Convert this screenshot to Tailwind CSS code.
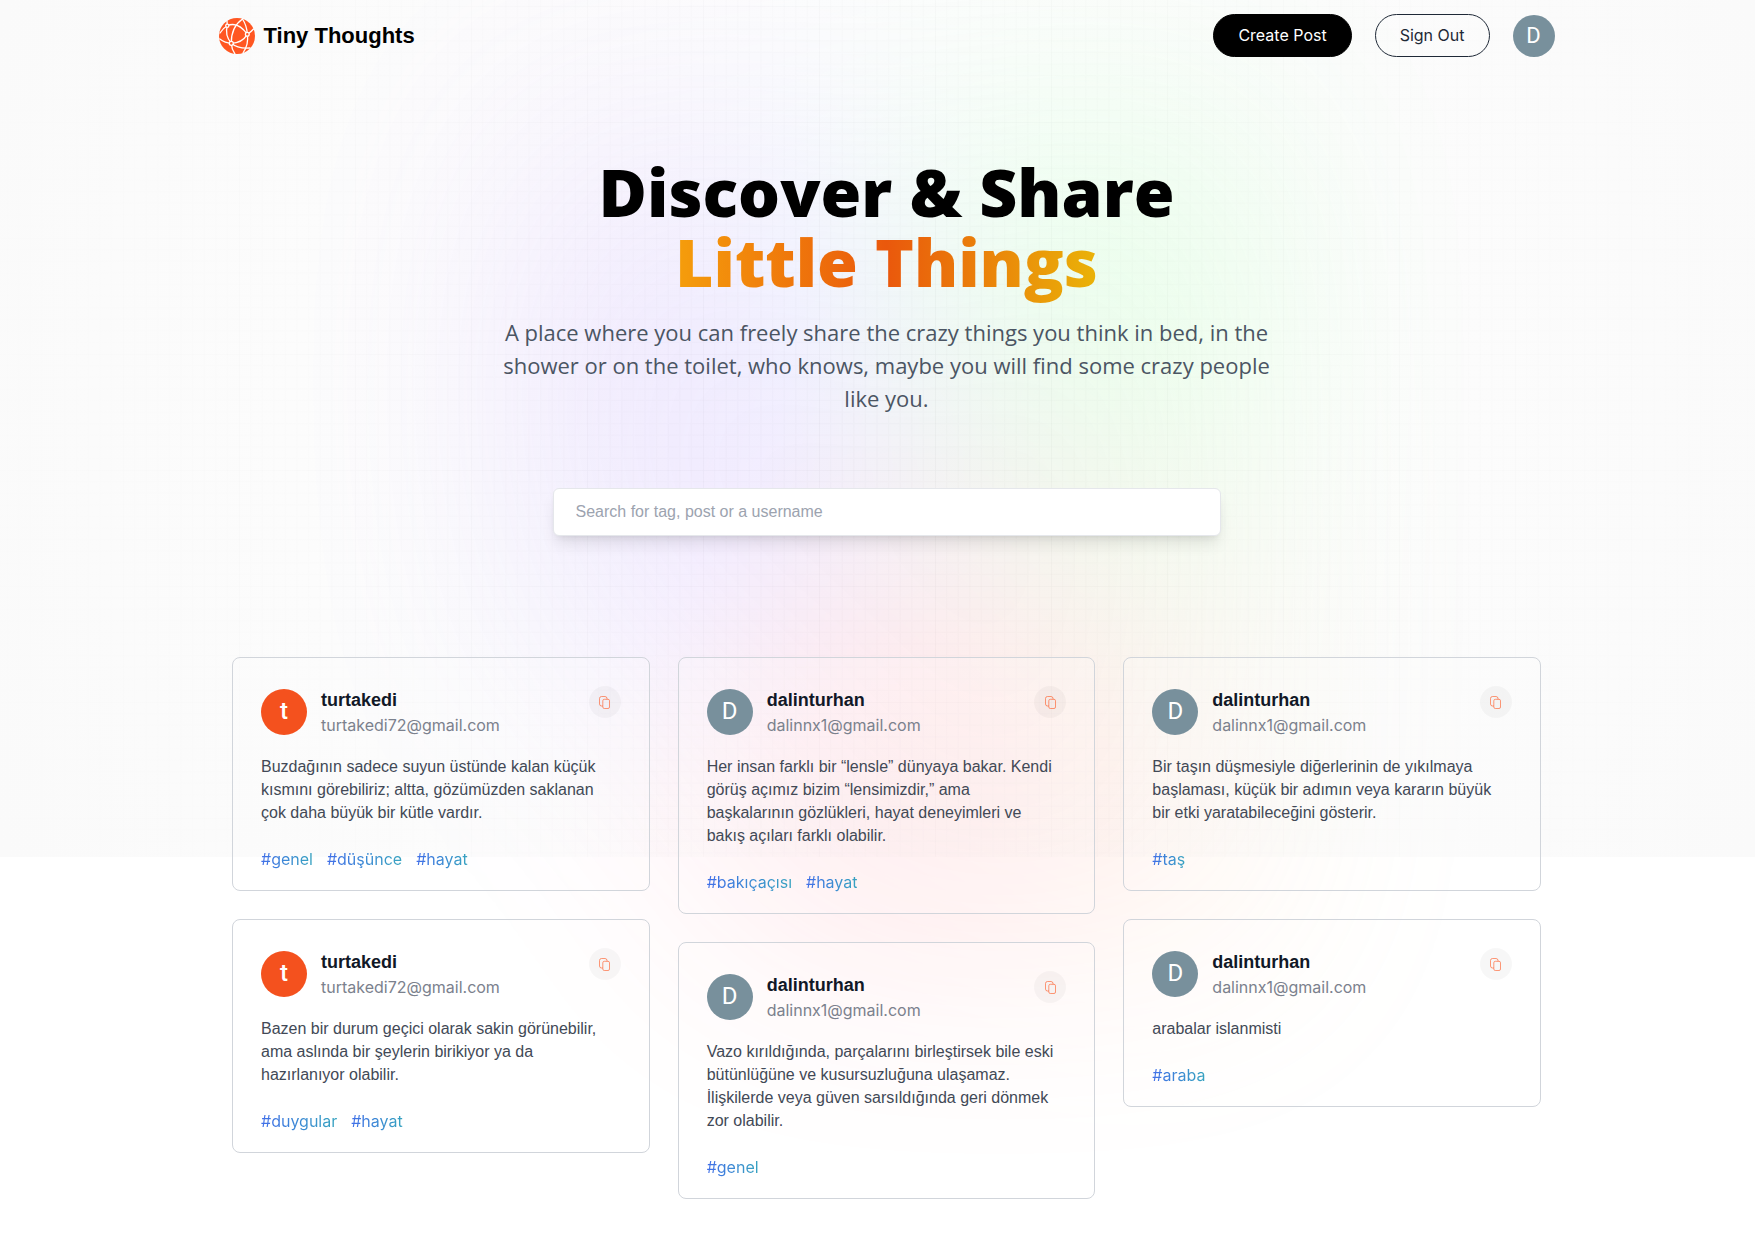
<!DOCTYPE html>
<html lang="tr">
<head>
<meta charset="utf-8">
<meta name="viewport" content="width=device-width, initial-scale=1">
<title>Tiny Thoughts</title>
<script src="https://cdn.jsdelivr.net/npm/@tailwindcss/browser@4"></script>
</head>
<body class="relative isolate min-h-screen overflow-x-hidden bg-white font-['Liberation_Sans',Arial,sans-serif] text-[16px] leading-[23px]">

<!-- shared icons -->
<svg class="hidden" aria-hidden="true">
  <symbol id="copy" viewBox="0 0 11 13" fill="none" stroke="currentColor" stroke-width="1" stroke-linejoin="round">
    <path d="M3.800 10H2.500a2 2 0 0 1-2-2V2.500a2 2 0 0 1 2-2H6a2 2 0 0 1 2 2v.800"/>
    <rect x="3.800" y="3.300" width="6.700" height="9.200" rx="1.500"/>
  </symbol>
</svg>

<!-- backdrop: grid, vignette and colour glow -->
<div class="pointer-events-none absolute inset-x-0 top-0 -z-10 h-[857px]" aria-hidden="true">
  <svg class="absolute inset-0 h-full w-full">
    <defs>
      <pattern id="grid" width="100" height="100" patternUnits="userSpaceOnUse" patternTransform="translate(7 6) scale(1.16)">
        <path d="M10 0V100M20 0V100M30 0V100M40 0V100M50 0V100M60 0V100M70 0V100M80 0V100M90 0V100M0 10H100M0 20H100M0 30H100M0 40H100M0 50H100M0 60H100M0 70H100M0 80H100M0 90H100" stroke="#000" stroke-opacity=".016"/>
        <path d="M0 0V100M0 0H100" stroke="#000" stroke-opacity=".05"/>
      </pattern>
    </defs>
    <rect width="100%" height="100%" fill="url(#grid)"/>
  </svg>
  <div class="absolute inset-0 bg-[radial-gradient(circle,rgba(250,250,250,0)_0,#fafafa_100%)]"></div>
  <div class="absolute inset-0 flex justify-center pl-[18px]">
    <div class="relative top-[93px] h-full w-full max-w-[743px] opacity-15 [filter:blur(116px)_saturate(150%)] bg-[radial-gradient(at_97%_21%,hsla(125,98%,72%,1)_0px,transparent_50%),radial-gradient(at_52%_99%,hsla(354,98%,61%,1)_0px,transparent_50%),radial-gradient(at_10%_29%,hsla(256,96%,67%,1)_0px,transparent_50%),radial-gradient(at_97%_96%,hsla(38,60%,74%,1)_0px,transparent_50%),radial-gradient(at_33%_50%,hsla(222,67%,73%,1)_0px,transparent_50%),radial-gradient(at_79%_53%,hsla(343,68%,79%,1)_0px,transparent_50%)]"></div>
  </div>
</div>

<div class="flex flex-col items-center pb-9 pl-[18px]">

  <nav class="flex w-full max-w-[1336px] items-center justify-between py-[14px]">
    <a href="#" class="flex items-center gap-[9px]">
      <svg class="h-9 w-9" viewBox="0 0 36 36" aria-hidden="true">
        <circle cx="18" cy="18" r="18" fill="#ff5722"/>
        <g fill="none" stroke="#fff" stroke-width="1.300" stroke-linecap="round">
          <path d="M8.300 7.700Q19 3 28.300 16.300"/>
          <path d="M8.300 7.700Q5.500 17 12.300 25.300"/>
          <path d="M12.300 25.300Q12 9 23.500 1"/>
          <path d="M12.300 25.300Q23 25 28.300 16.300"/>
          <path d="M28.300 16.300Q28 8 23.500 1"/>
          <path d="M28.300 16.300Q30 26 24 35"/>
          <path d="M28.300 16.300Q32 14 34.500 11"/>
          <path d="M12.300 25.300Q19 31 31 30"/>
          <path d="M12.300 25.300Q12.500 31 16 36"/>
          <path d="M12.300 25.300Q6 25 .800 21"/>
          <path d="M8.300 7.700Q4 10 1 15"/>
          <path d="M8.300 7.700L8 3"/>
        </g>
        <g fill="#ff5722" stroke="#fff" stroke-width="1.300">
          <circle cx="8.300" cy="7.700" r="1.600"/>
          <circle cx="28.300" cy="16.300" r="1.900"/>
          <circle cx="12.300" cy="25.300" r="2"/>
        </g>
      </svg>
      <span class="text-[22px] leading-[28px] font-bold text-black">Tiny Thoughts</span>
    </a>
    <div class="flex items-center gap-[23px] font-['Inter',sans-serif]">
      <button type="button" class="h-[43px] rounded-full border border-black bg-black px-[24px] text-white">Create Post</button>
      <button type="button" class="h-[43px] rounded-full border border-[#1f2937] px-[24px] text-[#1f2937]">Sign Out</button>
      <a href="#" aria-label="Profile" class="flex size-[42px] items-center justify-center rounded-full bg-[#78909c] font-['Roboto',sans-serif] text-[22px] text-white">D</a>
    </div>
  </nav>

  <header class="mt-[85px] flex flex-col items-center text-center font-['Open_Sans',sans-serif]">
    <h1 class="text-[66px] leading-[70px] font-extrabold text-black">Discover &amp; Share<br>
      <span class="bg-linear-to-r/srgb from-[#f59e0b] via-[#ea580c] to-[#eab308] bg-clip-text text-transparent">Little Things</span></h1>
    <p class="mt-[20px] max-w-[780px] text-[22px] leading-[33px] text-[#4b5563]">A place where you can freely share the crazy things you think in bed, in the shower or on the toilet, who knows, maybe you will find some crazy people like you.</p>
  </header>

  <form class="mt-[73px] w-full max-w-[668px]">
    <input type="text" aria-label="Search" placeholder="Search for tag, post or a username" class="block h-[48px] w-full rounded-md border border-[#e5e7eb] bg-white px-[22px] shadow-lg outline-none placeholder:text-[#9ca3af]">
  </form>

  <main class="mt-[121px] grid w-full max-w-[1309px] grid-cols-3 items-start gap-7 text-[#424956]">
    <div class="flex flex-col gap-7">
      <article class="flex flex-col rounded-lg border border-[#d1d5db] bg-white/20 px-7 pt-7 pb-[19px]">
        <div class="flex items-start justify-between">
          <div class="flex items-center gap-[14px]">
            <span class="flex size-[46px] items-center justify-center rounded-full bg-[#f4511e] font-['Roboto',sans-serif] text-[24px] font-medium text-white">t</span>
            <div>
              <h3 class="text-[18px] leading-7 font-bold text-[#111827]">turtakedi</h3>
              <p class="font-['Inter',sans-serif] text-[#7b818d]">turtakedi72@gmail.com</p>
            </div>
          </div>
          <button type="button" aria-label="Copy" class="flex size-8 items-center justify-center rounded-full bg-black/3 text-[#ff5722]/60"><svg class="h-[13px] w-[11px]"><use href="#copy"/></svg></button>
        </div>
        <p class="mt-[18px] pr-[7px]">Buzdağının sadece suyun üstünde kalan küçük kısmını görebiliriz; altta, gözümüzden saklanan çok daha büyük bir kütle vardır.</p>
        <div class="mt-6 flex gap-[14px] font-['Inter',sans-serif]">
          <a href="#" class="bg-linear-to-r/srgb from-[#416fe8] to-[#37a3c0] bg-clip-text text-transparent">#genel</a>
          <a href="#" class="bg-linear-to-r/srgb from-[#416fe8] to-[#37a3c0] bg-clip-text text-transparent">#düşünce</a>
          <a href="#" class="bg-linear-to-r/srgb from-[#416fe8] to-[#37a3c0] bg-clip-text text-transparent">#hayat</a>
        </div>
      </article>
      <article class="flex flex-col rounded-lg border border-[#d1d5db] bg-white/20 px-7 pt-7 pb-[19px]">
        <div class="flex items-start justify-between">
          <div class="flex items-center gap-[14px]">
            <span class="flex size-[46px] items-center justify-center rounded-full bg-[#f4511e] font-['Roboto',sans-serif] text-[24px] font-medium text-white">t</span>
            <div>
              <h3 class="text-[18px] leading-7 font-bold text-[#111827]">turtakedi</h3>
              <p class="font-['Inter',sans-serif] text-[#7b818d]">turtakedi72@gmail.com</p>
            </div>
          </div>
          <button type="button" aria-label="Copy" class="flex size-8 items-center justify-center rounded-full bg-black/3 text-[#ff5722]/60"><svg class="h-[13px] w-[11px]"><use href="#copy"/></svg></button>
        </div>
        <p class="mt-[18px] pr-[7px]">Bazen bir durum geçici olarak sakin görünebilir, ama aslında bir şeylerin birikiyor ya da hazırlanıyor olabilir.</p>
        <div class="mt-6 flex gap-[14px] font-['Inter',sans-serif]">
          <a href="#" class="bg-linear-to-r/srgb from-[#416fe8] to-[#37a3c0] bg-clip-text text-transparent">#duygular</a>
          <a href="#" class="bg-linear-to-r/srgb from-[#416fe8] to-[#37a3c0] bg-clip-text text-transparent">#hayat</a>
        </div>
      </article>
    </div>

    <div class="flex flex-col gap-7">
      <article class="flex flex-col rounded-lg border border-[#d1d5db] bg-white/20 px-7 pt-7 pb-[19px]">
        <div class="flex items-start justify-between">
          <div class="flex items-center gap-[14px]">
            <span class="flex size-[46px] items-center justify-center rounded-full bg-[#78909c] font-['Roboto',sans-serif] text-[24px] text-white">D</span>
            <div>
              <h3 class="text-[18px] leading-7 font-bold text-[#111827]">dalinturhan</h3>
              <p class="font-['Inter',sans-serif] text-[#7b818d]">dalinnx1@gmail.com</p>
            </div>
          </div>
          <button type="button" aria-label="Copy" class="flex size-8 items-center justify-center rounded-full bg-black/3 text-[#ff5722]/60"><svg class="h-[13px] w-[11px]"><use href="#copy"/></svg></button>
        </div>
        <p class="mt-[18px] pr-[7px]">Her insan farklı bir “lensle” dünyaya bakar. Kendi görüş açımız bizim “lensimizdir,” ama başkalarının gözlükleri, hayat deneyimleri ve bakış açıları farklı olabilir.</p>
        <div class="mt-6 flex gap-[14px] font-['Inter',sans-serif]">
          <a href="#" class="bg-linear-to-r/srgb from-[#416fe8] to-[#37a3c0] bg-clip-text text-transparent">#bakıçaçısı</a>
          <a href="#" class="bg-linear-to-r/srgb from-[#416fe8] to-[#37a3c0] bg-clip-text text-transparent">#hayat</a>
        </div>
      </article>
      <article class="flex flex-col rounded-lg border border-[#d1d5db] bg-white/20 px-7 pt-7 pb-[19px]">
        <div class="flex items-start justify-between">
          <div class="flex items-center gap-[14px]">
            <span class="flex size-[46px] items-center justify-center rounded-full bg-[#78909c] font-['Roboto',sans-serif] text-[24px] text-white">D</span>
            <div>
              <h3 class="text-[18px] leading-7 font-bold text-[#111827]">dalinturhan</h3>
              <p class="font-['Inter',sans-serif] text-[#7b818d]">dalinnx1@gmail.com</p>
            </div>
          </div>
          <button type="button" aria-label="Copy" class="flex size-8 items-center justify-center rounded-full bg-black/3 text-[#ff5722]/60"><svg class="h-[13px] w-[11px]"><use href="#copy"/></svg></button>
        </div>
        <p class="mt-[18px] pr-[7px]">Vazo kırıldığında, parçalarını birleştirsek bile eski bütünlüğüne ve kusursuzluğuna ulaşamaz. İlişkilerde veya güven sarsıldığında geri dönmek zor olabilir.</p>
        <div class="mt-6 flex gap-[14px] font-['Inter',sans-serif]">
          <a href="#" class="bg-linear-to-r/srgb from-[#416fe8] to-[#37a3c0] bg-clip-text text-transparent">#genel</a>
        </div>
      </article>
    </div>

    <div class="flex flex-col gap-7">
      <article class="flex flex-col rounded-lg border border-[#d1d5db] bg-white/20 px-7 pt-7 pb-[19px]">
        <div class="flex items-start justify-between">
          <div class="flex items-center gap-[14px]">
            <span class="flex size-[46px] items-center justify-center rounded-full bg-[#78909c] font-['Roboto',sans-serif] text-[24px] text-white">D</span>
            <div>
              <h3 class="text-[18px] leading-7 font-bold text-[#111827]">dalinturhan</h3>
              <p class="font-['Inter',sans-serif] text-[#7b818d]">dalinnx1@gmail.com</p>
            </div>
          </div>
          <button type="button" aria-label="Copy" class="flex size-8 items-center justify-center rounded-full bg-black/3 text-[#ff5722]/60"><svg class="h-[13px] w-[11px]"><use href="#copy"/></svg></button>
        </div>
        <p class="mt-[18px] pr-[7px]">Bir taşın düşmesiyle diğerlerinin de yıkılmaya başlaması, küçük bir adımın veya kararın büyük bir etki yaratabileceğini gösterir.</p>
        <div class="mt-6 flex gap-[14px] font-['Inter',sans-serif]">
          <a href="#" class="bg-linear-to-r/srgb from-[#416fe8] to-[#37a3c0] bg-clip-text text-transparent">#taş</a>
        </div>
      </article>
      <article class="flex flex-col rounded-lg border border-[#d1d5db] bg-white/20 px-7 pt-7 pb-[19px]">
        <div class="flex items-start justify-between">
          <div class="flex items-center gap-[14px]">
            <span class="flex size-[46px] items-center justify-center rounded-full bg-[#78909c] font-['Roboto',sans-serif] text-[24px] text-white">D</span>
            <div>
              <h3 class="text-[18px] leading-7 font-bold text-[#111827]">dalinturhan</h3>
              <p class="font-['Inter',sans-serif] text-[#7b818d]">dalinnx1@gmail.com</p>
            </div>
          </div>
          <button type="button" aria-label="Copy" class="flex size-8 items-center justify-center rounded-full bg-black/3 text-[#ff5722]/60"><svg class="h-[13px] w-[11px]"><use href="#copy"/></svg></button>
        </div>
        <p class="mt-[18px] pr-[7px]">arabalar islanmisti</p>
        <div class="mt-6 flex gap-[14px] font-['Inter',sans-serif]">
          <a href="#" class="bg-linear-to-r/srgb from-[#416fe8] to-[#37a3c0] bg-clip-text text-transparent">#araba</a>
        </div>
      </article>
    </div>
  </main>
</div>
</body>
</html>
